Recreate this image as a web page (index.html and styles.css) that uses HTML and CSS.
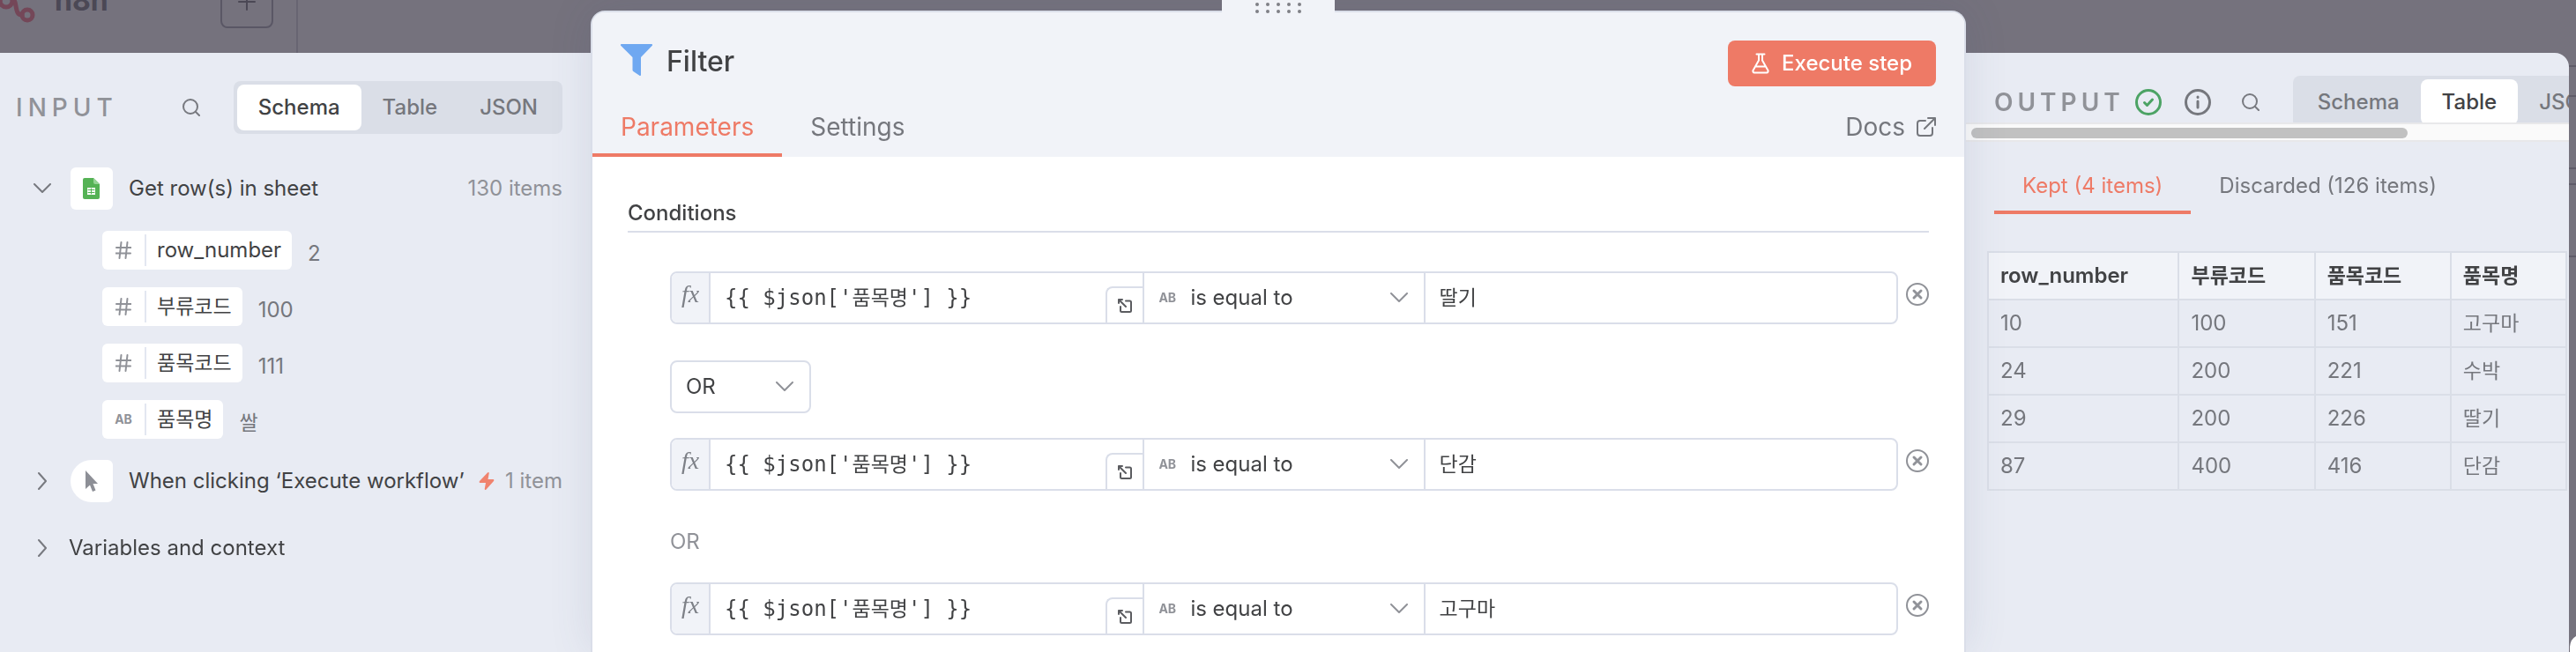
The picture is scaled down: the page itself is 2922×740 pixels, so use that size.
FILE: index.html
```html
<!DOCTYPE html>
<html lang="en">
<head>
  <meta charset="UTF-8">
  <meta name="viewport" content="width=device-width, initial-scale=1.0">
  <title>Filter - n8n</title>
  <link rel="stylesheet" href="styles.css">
</head>
<body>
  <!-- shared icons -->
  <svg class="sprite" aria-hidden="true">
    <symbol id="i-search" viewBox="0 0 20 20"><circle cx="9" cy="9" r="8"/><path d="M15 15l4 4"/></symbol>
    <symbol id="i-hash" viewBox="0 0 18 20"><path d="M6.500 1l-2 18M13.500 1l-2 18M1 7h16.500M.5 13.500H17"/></symbol>
    <symbol id="i-down" viewBox="0 0 20 12"><path d="M1 1l9 9 9-9"/></symbol>
    <symbol id="i-right" viewBox="0 0 12 20"><path d="M2 1l8 9-8 9"/></symbol>
    <symbol id="i-close" viewBox="0 0 26 26"><circle cx="13" cy="13" r="12"/><path class="bold" d="M9 9l8 8M17 9l-8 8"/></symbol>
    <symbol id="i-expand" viewBox="0 0 16 16"><path d="M1 5V1h4M1 1l8 8M9 2.500h4.500a1.500 1.500 0 0 1 1.500 1.500v9.500a1.500 1.500 0 0 1-1.500 1.500h-9A1.500 1.500 0 0 1 3 13.500V9"/></symbol>
  </svg>

  <div class="app" aria-hidden="true">
    <div class="sidebar">
      <svg class="logo" width="60" height="64" viewBox="0 0 60 64">
        <circle cx="7" cy="38" r="7"/><circle cx="31" cy="54" r="6"/><circle cx="36" cy="23" r="7"/>
        <path d="M-6 38H0M13 35c8 2 2 19 12 19M14 35l16-8"/>
      </svg>
      <span class="brand">n8n</span>
      <span class="add"><svg width="20" height="20" viewBox="0 0 20 20"><path d="M10 1v18M1 10h18"/></svg></span>
    </div>
    <div class="canvas">
      <svg width="8" height="740" viewBox="0 0 8 740">
        <path d="M0 75h8M0 109h8M0 191h8M0 209h8M0 291h8"/>
        <path class="corner" d="M1 740v-6q1-9 7-12v18z"/>
      </svg>
    </div>
  </div>

  <div class="ndv">
    <section class="panel input-panel">
      <header class="panel-header">
        <h2 class="panel-title">INPUT</h2>
        <button class="icon-btn" aria-label="Search input"><svg width="20" height="20"><use href="#i-search"/></svg></button>
        <div class="tabs">
          <button class="tab active">Schema</button>
          <button class="tab">Table</button>
          <button class="tab">JSON</button>
        </div>
      </header>

      <div class="node-row">
        <button class="toggle" aria-label="Collapse"><svg width="20" height="12"><use href="#i-down"/></svg></button>
        <span class="node-icon">
          <svg width="20" height="24" viewBox="0 0 20 24">
            <path fill="#55b255" d="M2 0h10l7 7v15a2 2 0 0 1-2 2H2a2 2 0 0 1-2-2V2a2 2 0 0 1 2-2z"/>
            <path fill="#96d396" d="M12 0l7 7h-5a2 2 0 0 1-2-2z"/>
            <path fill="#fff" d="M5 11h9v8H5z"/>
            <path stroke="#55b255" d="M6 13.500h7M6 16.500h7M9.500 12v6"/>
          </svg>
        </span>
        <span class="node-name">Get row(s) in sheet</span>
        <span class="count">130 items</span>
      </div>
      <ul class="fields">
        <li><span class="pill"><i class="type"><svg width="18" height="20"><use href="#i-hash"/></svg></i><span>row_number</span></span><span class="value">2</span></li>
        <li><span class="pill"><i class="type"><svg width="18" height="20"><use href="#i-hash"/></svg></i><span class="ko">부류코드</span></span><span class="value">100</span></li>
        <li><span class="pill"><i class="type"><svg width="18" height="20"><use href="#i-hash"/></svg></i><span class="ko">품목코드</span></span><span class="value">111</span></li>
        <li><span class="pill"><i class="type">AB</i><span class="ko">품목명</span></span><span class="value ko">쌀</span></li>
      </ul>
      <div class="node-row">
        <button class="toggle" aria-label="Expand"><svg width="12" height="20"><use href="#i-right"/></svg></button>
        <span class="node-icon trigger">
          <svg width="16" height="26" viewBox="0 0 16 26"><path fill="#8d8f96" d="M1 1l14 15H9.500l3 7.500-3.500 1.500-3-7.500L1 22z"/></svg>
        </span>
        <span class="node-name">When clicking ‘Execute workflow’</span>
        <span class="count">
          <svg width="18" height="20" viewBox="0 0 18 20"><path fill="#f0836e" d="M10 .5c1-1 2-.4 1.700.8L10.500 8H16c1.300 0 1.700 1 1 1.900L8.500 19.400c-1 1-2 .4-1.700-.8L8 12H2c-1.300 0-1.700-1-1-1.900z"/></svg>
          1 item
        </span>
      </div>
      <div class="node-row context">
        <button class="toggle" aria-label="Expand"><svg width="12" height="20"><use href="#i-right"/></svg></button>
        <span class="node-name">Variables and context</span>
      </div>
    </section>

    <main class="main-panel">
      <div class="drag-handle">
        <svg width="52" height="12" viewBox="0 0 52 12">
          <circle cx="2" cy="2" r="2"/><circle cx="14" cy="2" r="2"/><circle cx="26" cy="2" r="2"/><circle cx="38" cy="2" r="2"/><circle cx="50" cy="2" r="2"/>
          <circle cx="2" cy="10" r="2"/><circle cx="14" cy="10" r="2"/><circle cx="26" cy="10" r="2"/><circle cx="38" cy="10" r="2"/><circle cx="50" cy="10" r="2"/>
        </svg>
      </div>
      <header class="main-header">
        <div class="title-row">
          <svg width="36" height="36" viewBox="0 0 36 36"><path fill="#6fa8f1" d="M1 0h34a1 1 0 0 1 .8 1.700L23 15v20a1 1 0 0 1-1.600.8l-6.700-4.600A2 2 0 0 1 13.500 29.500V15L.2 1.700A1 1 0 0 1 1 0z"/></svg>
          <h1>Filter</h1>
          <button class="execute">
            <svg width="20" height="24" viewBox="0 0 20 24"><path d="M5.500 1.500h9M8 1.500v7L1.500 20a1.800 1.800 0 0 0 1.500 2.500h14a1.800 1.800 0 0 0 1.500-2.500L12 8.500v-7M5 15.500h10"/></svg>
            Execute step
          </button>
        </div>
        <nav class="main-tabs">
          <a href="#parameters" class="active">Parameters</a>
          <a href="#settings">Settings</a>
          <a href="#docs" class="docs">Docs
            <svg width="22" height="22" viewBox="0 0 22 22"><path d="M13 1h8v8M21 1L9 13M10 4H4a3 3 0 0 0-3 3v11a3 3 0 0 0 3 3h11a3 3 0 0 0 3-3v-6"/></svg>
          </a>
        </nav>
      </header>

      <div class="main-body">
        <h3>Conditions</h3>
        <div class="conditions">
          <div class="condition">
            <div class="condition-fields">
              <div class="expression">
                <span class="fx">fx</span>
                <div class="code" role="textbox" aria-label="Expression 1" contenteditable="true" spellcheck="false">{{ $json['<span class="ko">품목명</span>'] }}</div>
                <button class="expand" aria-label="Open editor"><svg width="16" height="16"><use href="#i-expand"/></svg></button>
              </div>
              <div class="operator">
                <span class="ab">AB</span>
                <select aria-label="Operator 1"><option>is equal to</option><option>is not equal to</option></select>
                <svg width="20" height="12"><use href="#i-down"/></svg>
              </div>
              <input class="ko" type="text" aria-label="Value 1" value="딸기">
            </div>
            <button class="remove" aria-label="Remove condition 1"><svg width="26" height="26"><use href="#i-close"/></svg></button>
          </div>

          <div class="combinator">
            <select aria-label="Combinator"><option>OR</option><option>AND</option></select>
            <svg width="20" height="12"><use href="#i-down"/></svg>
          </div>

          <div class="condition">
            <div class="condition-fields">
              <div class="expression">
                <span class="fx">fx</span>
                <div class="code" role="textbox" aria-label="Expression 2" contenteditable="true" spellcheck="false">{{ $json['<span class="ko">품목명</span>'] }}</div>
                <button class="expand" aria-label="Open editor"><svg width="16" height="16"><use href="#i-expand"/></svg></button>
              </div>
              <div class="operator">
                <span class="ab">AB</span>
                <select aria-label="Operator 2"><option>is equal to</option><option>is not equal to</option></select>
                <svg width="20" height="12"><use href="#i-down"/></svg>
              </div>
              <input class="ko" type="text" aria-label="Value 2" value="단감">
            </div>
            <button class="remove" aria-label="Remove condition 2"><svg width="26" height="26"><use href="#i-close"/></svg></button>
          </div>

          <p class="or-text">OR</p>

          <div class="condition">
            <div class="condition-fields">
              <div class="expression">
                <span class="fx">fx</span>
                <div class="code" role="textbox" aria-label="Expression 3" contenteditable="true" spellcheck="false">{{ $json['<span class="ko">품목명</span>'] }}</div>
                <button class="expand" aria-label="Open editor"><svg width="16" height="16"><use href="#i-expand"/></svg></button>
              </div>
              <div class="operator">
                <span class="ab">AB</span>
                <select aria-label="Operator 3"><option>is equal to</option><option>is not equal to</option></select>
                <svg width="20" height="12"><use href="#i-down"/></svg>
              </div>
              <input class="ko" type="text" aria-label="Value 3" value="고구마">
            </div>
            <button class="remove" aria-label="Remove condition 3"><svg width="26" height="26"><use href="#i-close"/></svg></button>
          </div>
        </div>
      </div>
    </main>

    <section class="panel output-panel">
      <header class="panel-header">
        <h2 class="panel-title">OUTPUT</h2>
        <svg class="status ok" width="30" height="30" viewBox="0 0 30 30"><circle cx="15" cy="15" r="13.500"/><path d="M10.500 15.500l3 3 6-6.500"/></svg>
        <svg class="status" width="30" height="30" viewBox="0 0 30 30"><circle cx="15" cy="15" r="13.500"/><path d="M15 14v7M15 9v.5"/></svg>
        <button class="icon-btn" aria-label="Search output"><svg width="20" height="20"><use href="#i-search"/></svg></button>
        <div class="tabs">
          <button class="tab">Schema</button>
          <button class="tab active">Table</button>
          <button class="tab">JSON</button>
        </div>
      </header>
      <div class="scrollbar"><div class="thumb"></div></div>

      <nav class="branch-tabs">
        <a href="#kept" class="active">Kept (4 items)</a>
        <a href="#discarded">Discarded (126 items)</a>
      </nav>

      <table>
        <colgroup><col class="col-number"><col><col><col class="col-name"></colgroup>
        <thead>
          <tr><th>row_number</th><th class="ko">부류코드</th><th class="ko">품목코드</th><th class="ko">품목명</th></tr>
        </thead>
        <tbody>
          <tr><td>10</td><td>100</td><td>151</td><td class="ko">고구마</td></tr>
          <tr><td>24</td><td>200</td><td>221</td><td class="ko">수박</td></tr>
          <tr><td>29</td><td>200</td><td>226</td><td class="ko">딸기</td></tr>
          <tr><td>87</td><td>400</td><td>416</td><td class="ko">단감</td></tr>
        </tbody>
      </table>
    </section>
  </div>
</body>
</html>
```

FILE: styles.css
```css
* {
  box-sizing: border-box;
}

body {
  margin: 0;
  height: 100vh;
  overflow: hidden;
  background-color: #75727d;
  color: #414244;
  font-family: Inter, "Noto Sans CJK KR", sans-serif;
  font-size: 24px;
  line-height: 32px;
}

h1, h2, h3, p, ul {
  margin: 0;
  padding: 0;
}

button, input, select {
  font: inherit;
  color: inherit;
  border: none;
  background: none;
  margin: 0;
  padding: 0;
}

button {
  cursor: pointer;
}

a {
  color: inherit;
  text-decoration: none;
}

svg {
  display: block;
  flex: none;
  fill: none;
  stroke-linecap: round;
  stroke-linejoin: round;
}

.sprite {
  position: absolute;
  width: 0;
  height: 0;
}

.bold {
  stroke-width: 3;
}

.ko {
  font-size: 23px;
}

/* editor behind the dialog */
.app {
  display: flex;
  height: 100vh;
}

.sidebar {
  display: flex;
  align-items: flex-start;
  width: 338px;
  padding-right: 26px;
  border-right: 2px solid #686572;
}

.logo {
  margin-top: -37px;
  stroke: #744758;
  stroke-width: 5;
}

.brand {
  margin: -19px auto 0 2px;
  font-size: 32px;
  font-weight: 700;
  line-height: 40px;
  color: #4b4855;
}

.add {
  display: flex;
  justify-content: center;
  width: 60px;
  height: 60px;
  margin-top: -28px;
  padding-top: 18px;
  border: 2px solid #5a5765;
  border-radius: 8px;
}

.add svg {
  stroke: #4b4855;
  stroke-width: 2;
}

.canvas {
  flex: 1;
  display: flex;
  justify-content: flex-end;
}

.canvas svg {
  stroke: #5f5c69;
  stroke-width: 2;
}

.canvas .corner {
  fill: #fff;
  stroke: none;
}

/* node detail view */
.ndv {
  position: fixed;
  inset: 0;
  display: grid;
  grid-template-columns: 670fr 1560fr 684fr;
  padding-right: 8px;
}

.panel {
  min-width: 0;
  margin-top: 60px;
  background-color: #e8ebf3;
}

.panel-header {
  display: flex;
  align-items: center;
}

.panel-title {
  font-size: 28px;
  font-weight: 500;
  letter-spacing: 6px;
  color: #909298;
}

.icon-btn svg {
  stroke: #77797f;
  stroke-width: 2;
}

.tabs {
  display: flex;
  flex: none;
  padding: 4px;
  border-radius: 8px;
  background-color: #dadee7;
}

.tab {
  height: 52px;
  padding: 0 24px;
  border-radius: 8px;
  font-weight: 500;
  color: #75777d;
}

.tab.active {
  background-color: #fff;
  color: #414244;
}

/* input */
.input-panel {
  padding: 32px 32px 0 0;
}

.input-panel .panel-header {
  margin-bottom: 38px;
  padding-left: 18px;
}

.input-panel .icon-btn {
  margin-left: auto;
  margin-right: 38px;
}

.node-row {
  display: flex;
  align-items: center;
  height: 48px;
  padding-left: 38px;
}

.toggle {
  display: flex;
  justify-content: center;
  width: 20px;
  margin-right: 22px;
}

.toggle svg {
  stroke: #77797f;
  stroke-width: 2;
}

.node-icon {
  display: flex;
  align-items: center;
  justify-content: center;
  width: 48px;
  height: 48px;
  margin-right: 18px;
  border-radius: 6px;
  background-color: #fff;
}

.node-icon.trigger {
  border-radius: 24px 6px 6px 24px;
}

.count {
  display: flex;
  align-items: center;
  gap: 12px;
  margin-left: auto;
  color: #909298;
}

.context {
  margin-top: 28px;
}

.context .toggle {
  margin-right: 20px;
}

.fields {
  display: flex;
  flex-direction: column;
  gap: 20px;
  padding: 24px 0 24px 116px;
  list-style: none;
}

.fields li {
  display: flex;
  align-items: flex-start;
  gap: 18px;
}

.pill {
  display: flex;
  align-items: center;
  height: 44px;
  padding: 4px 12px 4px 0;
  border-radius: 6px;
  background-color: #fff;
}

.type {
  display: flex;
  align-items: center;
  justify-content: center;
  width: 50px;
  height: 36px;
  margin-right: 12px;
  border-right: 2px solid #e3e7f1;
  font-size: 14px;
  font-style: normal;
  font-weight: 700;
  color: #909298;
}

.type svg {
  stroke: #909298;
  stroke-width: 2;
}

.value {
  padding-top: 10px;
  color: #75777d;
}

/* parameters */
.main-panel {
  position: relative;
  z-index: 1;
  margin-top: 12px;
  border: 2px solid #dadee9;
  border-bottom: none;
  border-radius: 16px 16px 0 0;
  background-color: #fff;
  box-shadow: 0 0 50px rgba(68, 81, 120, 0.12);
}

.drag-handle {
  position: absolute;
  top: -14px;
  left: 50%;
  display: flex;
  justify-content: center;
  width: 128px;
  height: 20px;
  margin-left: -64px;
  padding-top: 3px;
  background-color: #f1f3f8;
}

.drag-handle svg {
  fill: #7f8086;
}

.main-header {
  border-radius: 14px 14px 0 0;
  background-color: #f1f3f8;
}

.title-row {
  display: flex;
  align-items: center;
  padding: 32px 32px 0;
}

.title-row > svg {
  margin-bottom: 8px;
}

h1 {
  margin: 0 0 4px 16px;
  font-size: 32px;
  font-weight: 500;
}

.execute {
  display: flex;
  align-items: center;
  gap: 14px;
  height: 52px;
  margin-left: auto;
  padding: 0 27px;
  border-radius: 8px;
  background-color: #ee7a66;
  color: #fff;
  font-weight: 500;
}

.execute svg {
  stroke: #fff;
  stroke-width: 2;
}

.main-tabs {
  display: flex;
  margin-top: 30px;
  font-size: 28px;
  color: #75777d;
}

.main-tabs a {
  padding: 0 32px 14px;
  border-bottom: 4px solid transparent;
}

.main-tabs .active,
.branch-tabs .active {
  border-color: #ee7a66;
  color: #ee7a66;
}

.main-tabs .docs {
  display: flex;
  align-items: center;
  gap: 13px;
  margin-left: auto;
}

.docs svg {
  stroke: #75777d;
  stroke-width: 2;
}

.main-body {
  padding: 48px 40px 0;
}

h3 {
  padding-bottom: 4px;
  border-bottom: 2px solid #dadee9;
  font-size: 24px;
  font-weight: 500;
}

.conditions {
  padding: 44px 0 0 48px;
}

.condition {
  display: flex;
  align-items: flex-start;
  gap: 9px;
}

.condition-fields {
  flex: 1;
  display: grid;
  grid-template-columns: 534fr 320fr 534fr;
  height: 60px;
  border: 2px solid #dadee9;
  border-radius: 8px;
  overflow: hidden;
}

.expression {
  display: flex;
  min-width: 0;
}

.fx {
  width: 44px;
  padding-top: 8px;
  border-right: 2px solid #dadee9;
  background-color: #f1f3f8;
  color: #7d8087;
  font-family: "Liberation Serif", serif;
  font-size: 28px;
  font-style: italic;
  text-align: center;
}

.code {
  flex: 1;
  padding: 12px 0 0 16px;
  font-family: "DejaVu Sans Mono", "Noto Sans CJK KR", monospace;
  white-space: pre;
  outline: none;
}

.expand {
  display: flex;
  align-items: center;
  justify-content: center;
  align-self: flex-end;
  width: 42px;
  height: 41px;
  border: 2px solid #dadee9;
  border-width: 2px 0 0 2px;
  border-radius: 8px 0 0 0;
}

.expand svg {
  stroke: #5b5c60;
  stroke-width: 2;
}

.operator {
  display: flex;
  align-items: center;
  padding: 0 18px 0 16px;
  border: 2px solid #dadee9;
  border-width: 0 2px;
}

.ab {
  width: 36px;
  font-size: 14px;
  font-weight: 700;
  color: #909298;
}

select {
  appearance: none;
  outline: none;
}

.operator select {
  flex: 1;
  height: 56px;
}

.operator svg,
.combinator svg {
  pointer-events: none;
  stroke: #909298;
  stroke-width: 2;
}

.condition input {
  width: 100%;
  padding: 0 16px;
  outline: none;
}

.condition .remove {
  margin-top: 13px;
}

.remove svg {
  stroke: #909298;
  stroke-width: 2;
}

.combinator {
  display: flex;
  align-items: center;
  width: 160px;
  height: 60px;
  margin: 41px 0 28px;
  padding: 0 18px 0 16px;
  border: 2px solid #dadee9;
  border-radius: 8px;
}

.combinator select {
  flex: 1;
  height: 56px;
}

.or-text {
  margin: 42px 0 30px;
  color: #909298;
}

/* output */
.output-panel {
  border-radius: 0 16px 0 0;
  overflow: hidden;
}

.output-panel .panel-header {
  align-items: flex-start;
  height: 79px;
  padding: 26px 0 0 32px;
  overflow: hidden;
}

.output-panel .panel-title {
  padding-top: 14px;
  font-weight: 600;
  letter-spacing: 5px;
}

.status {
  margin: 15px 0 0 26px;
  stroke: #75777d;
  stroke-width: 3;
}

.status.ok {
  margin-left: 12px;
  stroke: #4ca364;
}

.output-panel .icon-btn {
  margin: 20px 38px 0 35px;
}

.scrollbar {
  height: 22px;
  padding: 4px 0 4px 6px;
  border: 2px solid #e8e8ea;
  border-width: 2px 0;
  background-color: #fafafa;
}

.thumb {
  width: 73%;
  height: 12px;
  border-radius: 6px;
  background-color: #c1c1c1;
}

.branch-tabs {
  display: flex;
  padding: 34px 0 0 32px;
  color: #75777d;
}

.branch-tabs a {
  padding: 0 32px 12px;
  border-bottom: 4px solid transparent;
}

table {
  width: calc(100% - 26px);
  margin: 42px 0 0 24px;
  border-collapse: collapse;
  table-layout: fixed;
  color: #75777d;
}

.col-number {
  width: 33%;
}

.col-name {
  width: 20%;
}

th, td {
  height: 54px;
  padding: 0 13px;
  border: 2px solid #dadee7;
  text-align: left;
}

th {
  background-color: #f1f3f8;
  color: #414244;
  font-weight: 600;
}
```
